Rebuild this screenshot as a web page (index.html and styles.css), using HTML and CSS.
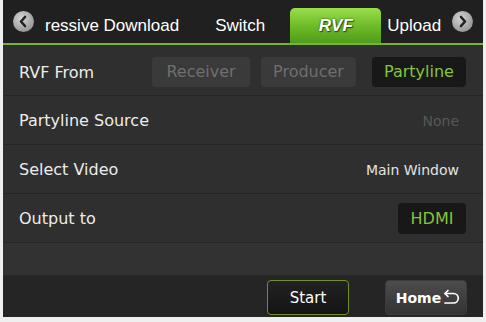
FILE: index.html
```html
<!DOCTYPE html>
<html lang="en">

<head>
    <meta charset="UTF-8">
    <meta name="viewport" content="width=device-width, initial-scale=1.0">
    <title>RVF</title>
    <link rel="stylesheet" href="styles.css">
</head>

<body>

    <div class="screen">
        <div class="tabbar">
            <span class="arrow">
                <svg width="21" height="21" viewBox="0 0 21 21">
                    <path d="M12 6 L8 10.5 L12 15" fill="none" stroke="#222" stroke-width="2.6" stroke-linecap="round" stroke-linejoin="round" />
                </svg>
            </span>
            <div class="tabs">
                <div class="track">
                    <div class="tab tab-first">ressive Download</div>
                    <div class="tab">Switch</div>
                    <div class="tab tab-on">RVF</div>
                    <div class="tab tab-after">Upload</div>
                </div>
            </div>
            <span class="arrow">
                <svg width="21" height="21" viewBox="0 0 21 21">
                    <path d="M9 6 L13 10.5 L9 15" fill="none" stroke="#222" stroke-width="2.6" stroke-linecap="round" stroke-linejoin="round" />
                </svg>
            </span>
        </div>
        <div class="tabline"></div>

        <div class="row row-first">
            <span class="label">RVF From</span>
            <div class="seg-group">
                <span class="seg seg-receiver">Receiver</span>
                <span class="seg seg-producer">Producer</span>
                <span class="seg seg-on">Partyline</span>
            </div>
        </div>
        <div class="row">
            <span class="label">Partyline Source</span>
            <span class="value value-off">None</span>
        </div>
        <div class="row">
            <span class="label">Select Video</span>
            <span class="value">Main Window</span>
        </div>
        <div class="row">
            <span class="label">Output to</span>
            <span class="seg seg-on seg-hdmi">HDMI</span>
        </div>
        <div class="row-empty"></div>

        <div class="footer">
            <button class="btn-start">Start</button>
            <button class="btn-home">Home
                <svg width="18" height="18" viewBox="0 0 18 18">
                    <path d="M3 4.5 H11.5 A4.7 4.7 0 0 1 11.5 14 H3" fill="none" stroke="#fff" stroke-width="1.7" stroke-linecap="round" />
                    <path d="M6 1.5 L3 4.5 L6 7.5" fill="none" stroke="#fff" stroke-width="1.7" stroke-linecap="round" stroke-linejoin="round" />
                </svg>
            </button>
        </div>
    </div>

</body>

</html>
```

FILE: styles.css
```css
* {
    margin: 0;
    padding: 0;
    box-sizing: border-box;
}

body {
    background-color: #efefef;
    font-family: "DejaVu Sans", Verdana, sans-serif;
}

.screen {
    width: 480px;
    height: 317px;
    margin-left: 3px;
    background-color: #2f2f2f;
    display: flex;
    flex-direction: column;
    overflow: hidden;
}

/* top tab strip */
.tabbar {
    height: 43px;
    background-color: #202020;
    display: flex;
    align-items: center;
    padding: 0 10px;
}

.arrow {
    width: 21px;
    height: 21px;
    border-radius: 50%;
    background: radial-gradient(circle at 40% 35%, #d4d4d4, #a3a3a3 60%, #858585);
    display: flex;
    flex-shrink: 0;
}

.tabs {
    flex: 1;
    height: 100%;
    overflow: hidden;
}

.track {
    display: flex;
    align-items: flex-end;
    height: 100%;
    font-family: "Liberation Sans", Arial, sans-serif;
    font-size: 17px;
    color: #ffffff;
    white-space: nowrap;
}

.tab {
    flex-shrink: 0;
    height: 35px;
    line-height: 35px;
    padding: 0 17px;
}

.tab-first {
    padding-left: 11px;
    padding-right: 19px;
}

.tab-on {
    width: 91px;
    padding: 0;
    margin-left: 8px;
    text-align: center;
    font-weight: bold;
    font-style: italic;
    border-radius: 5px 5px 0 0;
    background: linear-gradient(#9ade4c, #72c02c 45%, #4f9c1a);
    text-shadow: 0 0 2px #2d4d10, 1px 1px 1px #2d4d10;
}

.tab-after {
    padding-left: 6px;
}

.tabline {
    height: 2px;
    background-color: #74b436;
}

/* settings rows */
.row {
    height: 49px;
    display: flex;
    align-items: center;
    justify-content: space-between;
    padding: 1px 17px 0 16px;
    border-bottom: 1px solid #252525;
    background-color: #2f2f2f;
}

.row-first {
    height: 51px;
    padding-top: 4px;
}

.label {
    font-size: 16px;
    color: #ececec;
}

.seg-group {
    display: flex;
    gap: 11px;
}

.seg {
    height: 30px;
    line-height: 30px;
    border-radius: 4px;
    text-align: center;
    font-size: 16px;
    background-color: #3a3a3a;
    color: #6f6f6f;
}

.seg-receiver {
    width: 98px;
}

.seg-producer {
    width: 95px;
}

.seg-on {
    width: 94px;
    margin-left: 5px;
    background-color: #181818;
    color: #86c43c;
}

.seg-hdmi {
    width: 68px;
    height: 31px;
    line-height: 31px;
    margin-left: 0;
}

.value {
    font-size: 14px;
    color: #e2e2e2;
    margin-right: 7px;
}

.value-off {
    color: #575757;
}

.row-empty {
    flex: 1;
    background-color: #323232;
    border-bottom: 1px solid #2a2a2a;
}

/* bottom buttons */
.footer {
    height: 41px;
    background-color: #252525;
    display: flex;
    justify-content: flex-end;
    align-items: flex-start;
    gap: 36px;
    padding: 4px 16px 0 0;
}

.btn-start,
.btn-home {
    width: 82px;
    height: 35px;
    border-radius: 4px;
    font-family: "DejaVu Sans", Verdana, sans-serif;
    color: #ffffff;
    cursor: pointer;
}

.btn-start {
    font-size: 15px;
    border: 1px solid #6f8f2c;
    background: linear-gradient(#222222, #141414);
}

.btn-home {
    font-size: 14px;
    font-weight: bold;
    border: 1px solid #3c3c3c;
    background: linear-gradient(#4c4c4c, #333333);
    display: flex;
    align-items: center;
    justify-content: center;
    gap: 1px;
    padding-left: 4px;
}
```
